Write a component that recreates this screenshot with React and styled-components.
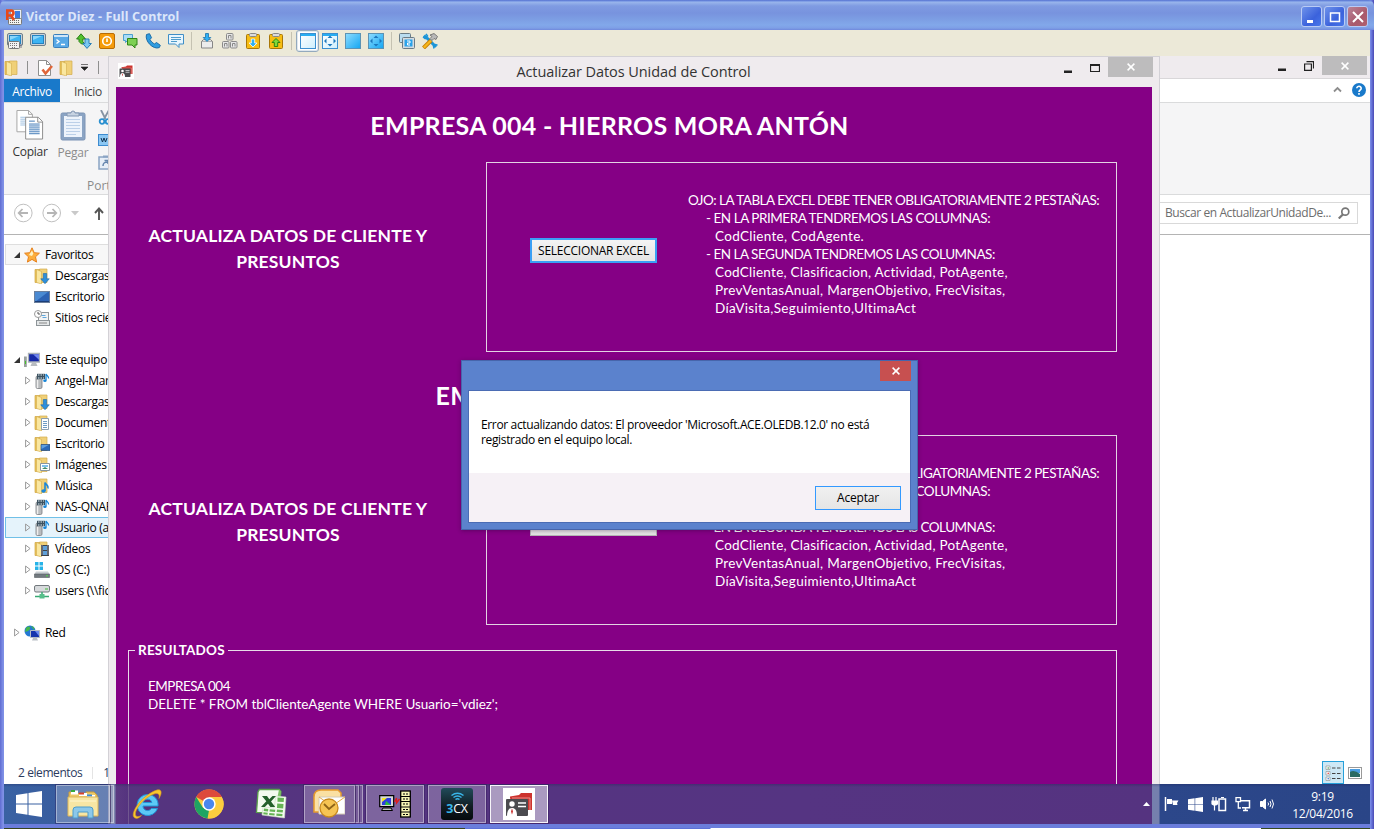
import React from "react";
import styled, { createGlobalStyle, css } from "styled-components";

const ui = '"Open Sans", "Noto Sans", sans-serif';
const form = 'Lato, "Open Sans", sans-serif';

const GlobalStyle = createGlobalStyle`
  *, *::before, *::after { box-sizing: border-box; }
  html, body { margin: 0; overflow: hidden; }
  body { font: 12px/16px ${ui}; color: #1a1a1a; }
  button { font: inherit; padding: 0; border: 0; }
  svg { display: block; flex: none; }
`;

/* ---------- remote session frame ---------- */
const Frame = styled.div`
  width: 1374px;
  height: 829px;
  display: flex;
  flex-direction: column;
  background: linear-gradient(90deg, #5f6cd2 0, #7f90e6 3px, #7f90e6 1370px, #6f80e2 1371px, #4a4ab4 1374px);
  overflow: hidden;
`;
const TitleBar = styled.header`
  height: 30px;
  flex: none;
  display: flex;
  align-items: center;
  padding: 3px 6px 0 6px;
  border-radius: 6px 6px 0 0;
  background: linear-gradient(#5b76cf 0, #6a8ae0 1px, #9ab6ec 2px, #93afe9 3px, #7f9be2 6px, #7893de 13px, #7d9fe4 20px, #82a8ea 25px, #7e9fe6 28px, #7088dc 30px);
`;
const SessionTitle = styled.h1`
  margin: 0 auto 0 4px;
  font: bold 12.5px/16px "Noto Sans", sans-serif;
  letter-spacing: 0.16px;
  color: #dce6fa;
`;
const XpButton = styled.button`
  width: 21px;
  height: 21px;
  margin-left: 2px;
  display: grid;
  place-items: center;
  border: 1px solid #b9cbf5;
  border-radius: 3px;
  background: ${(p) => (p.$close ? "linear-gradient(135deg,#b98397,#a9596c 60%,#b0606e)" : "linear-gradient(135deg,#6f93ea,#3b62dc 60%,#4877ea)")};
`;
const FrameBody = styled.div`
  flex: 1;
  min-height: 0;
  display: flex;
  flex-direction: column;
  margin: 0 4px;
`;
const SessionToolbar = styled.nav`
  height: 26px;
  flex: none;
  display: flex;
  align-items: center;
  padding-bottom: 4px;
  background: #ece9d8;
`;
const Tool = styled.button`
  width: 23px;
  height: 22px;
  display: grid;
  place-items: center;
  padding-right: 1px;
  background: none;
  ${(p) => p.$active && css`
    padding: 0;
    border: 1px solid #93a9bd;
    border-radius: 3px;
    background: #fff;
    box-shadow: inset 0 0 0 1px #dfe7ee;
  `}
`;
const ToolDivider = styled.span`
  width: 1px;
  height: 18px;
  margin: 0 4px 0 3px;
  background: #c5c2b2;
`;
const Desktop = styled.main`
  position: relative;
  height: 768px;
  flex: none;
  overflow: hidden;
  background: #fff;
`;
const FrameBottom = styled.div`
  height: 5px;
  flex: none;
  border-top: 4px solid #6b7ddb;
  background: linear-gradient(90deg, #36421c 461px, #5c70d6 461px, #5c70d6 706px, #fff 707px, #fff 1257px, #34471c 1257px);
`;

/* ---------- file explorer ---------- */
const Explorer = styled.section`
  height: 728px;
  display: flex;
  flex-direction: column;
  background: #fff;
`;
const ExplorerTop = styled.div`
  height: 23px;
  flex: none;
  display: flex;
  align-items: flex-start;
  justify-content: space-between;
  background: #efebee;
  border-bottom: 1px solid #d9d7d9;
`;
const QuickAccess = styled.div`
  display: flex;
  align-items: center;
  height: 23px;
  gap: ${(p) => p.$gap || 0}px;
`;
const QuickDivider = styled.i`
  width: 1px;
  height: 13px;
  margin: 0 9px 0 ${(p) => p.$before || 7}px;
  background: #8f8f8f;
`;
const Controls = styled.div`
  display: flex;
  align-items: flex-start;
  justify-content: flex-end;
  margin-right: ${(p) => p.$right}px;
`;
const ControlGlyph = styled.span`
  width: 27px;
  height: ${(p) => p.$h || 21}px;
  display: grid;
  place-items: center;
`;
const GreyClose = styled.button`
  width: 45px;
  height: ${(p) => p.$h}px;
  display: grid;
  place-items: center;
  background: #bdbcbd;
`;
const Tabs = styled.div`
  height: 24px;
  flex: none;
  display: flex;
  align-items: center;
  background: #fff;
  border-bottom: 1px solid #dadbdc;
`;
const Tab = styled.div`
  height: 23px;
  width: 56px;
  line-height: 25px;
  text-align: center;
  letter-spacing: -0.3px;
  color: ${(p) => (p.$file ? "#fff" : "#444")};
  background: ${(p) => (p.$file ? "#1979ca" : "#f5f6f7")};
`;
const Help = styled.div`
  margin-left: auto;
  display: flex;
  align-items: center;
  gap: 10px;
  padding: 0 4px 2px 0;
`;
const Ribbon = styled.div`
  height: 92px;
  flex: none;
  display: flex;
  padding-top: 7px;
  background: #f5f5f6;
  border-bottom: 1px solid #dadbdc;
`;
const RibbonItem = styled.div`
  width: ${(p) => p.$w}px;
  display: flex;
  flex-direction: column;
  align-items: center;
  gap: 4px;
  letter-spacing: -0.25px;
  white-space: nowrap;
  color: ${(p) => (p.$dim ? "#8c8c8c" : "#333")};
`;
const RibbonStack = styled.div`
  width: 60px;
  margin-left: 8px;
  display: flex;
  flex-direction: column;
  gap: 9px;
`;
const GroupLabel = styled.span`
  margin: -1px 0 0 -11px;
  color: #8a8a8a;
`;
const AddressBar = styled.div`
  height: 40px;
  flex: none;
  display: flex;
  align-items: center;
  padding: 0 12px 3px 9px;
  gap: 9px;
  border-bottom: 1px solid #b4b4b4;
  > svg:nth-child(4) { margin-left: 6px; }
`;
const SearchBox = styled.div`
  margin-left: auto;
  width: 206px;
  height: 22px;
  display: flex;
  align-items: center;
  justify-content: space-between;
  padding: 0 7px 0 12px;
  border: 1px solid #d9d9d9;
  color: #6d6d6d;
  letter-spacing: -0.41px;
  white-space: nowrap;
`;
const Tree = styled.ul`
  flex: 1;
  margin: 0;
  padding: 9px 0 0 1px;
  list-style: none;
`;
const TreeRow = styled.li`
  height: 21px;
  width: 140px;
  display: flex;
  align-items: center;
  padding-left: ${(p) => (p.$level ? 19 : 8)}px;
  white-space: nowrap;
  letter-spacing: -0.32px;
  color: #000;
  border: 1px solid ${(p) => (p.$state === "selected" ? "#70c0e7" : p.$state === "focus" ? "#dedede" : "transparent")};
  background: ${(p) => (p.$state === "selected" ? "#e5f3fb" : p.$state === "focus" ? "#f7f7f7" : "none")};
`;
const Expander = styled.span`
  width: ${(p) => (p.$level ? 9 : 10)}px;
  display: grid;
  place-items: center start;
`;
const TreeIcon = styled.span`
  width: 21px;
`;
const StatusBar = styled.footer`
  height: 23px;
  flex: none;
  display: flex;
  align-items: center;
  padding: 0 8px 0 14px;
  color: #2b3a5e;
  letter-spacing: -0.42px;
`;
const StatusDivider = styled.i`
  width: 1px;
  height: 12px;
  margin: 0 10px 0 10px;
  background: #e4e4e4;
`;
const ViewButtons = styled.div`
  margin-left: auto;
  display: flex;
  align-items: center;
  gap: 4px;
`;
const ViewActive = styled.span`
  width: 22px;
  height: 23px;
  display: grid;
  place-items: center;
  border: 1px solid #26a0da;
  background: #cde8f5;
`;

/* ---------- update tool window ---------- */
const AppWindow = styled.section`
  position: absolute;
  left: 104px;
  top: 0;
  width: 1052px;
  height: 768px;
  display: flex;
  flex-direction: column;
  padding: 0 7px;
  background: #efebee;
  border: 1px solid #d3d1d6;
  border-bottom: 0;
`;
const AppTitle = styled.header`
  height: 30px;
  flex: none;
  display: grid;
  grid-template-columns: 1fr auto 1fr;
  align-items: start;
  > svg { margin: 6px 0 0 2px; }
`;
const AppName = styled.h2`
  margin: 0 1px 0 0;
  font: 14.5px/29px ${ui};
  letter-spacing: -0.08px;
  color: #333;
`;
const AppBody = styled.div`
  flex: 1;
  padding: 0 35px 0 12px;
  background: #850085;
  color: #fff;
  font-family: ${form};
`;
const Company = styled.h3`
  height: ${(p) => p.$h}px;
  margin: 0;
  padding: 0 26px 0 0;
  text-align: center;
  font: bold 25px/${(p) => p.$line}px ${form};
  letter-spacing: 0.26px;
  white-space: nowrap;
`;
const UpdateRow = styled.div`
  height: 190px;
  display: grid;
  grid-template-columns: 320px 631px;
  justify-content: space-between;
`;
const UpdateLabel = styled.p`
  margin: 61px 0 0;
  text-align: center;
  font: bold 17.5px/26px ${form};
  letter-spacing: 0.18px;
`;
const GroupBox = styled.div`
  display: flex;
  align-items: flex-start;
  border: 1px solid #e3d3e3;
  padding-left: 43px;
`;
const ExcelButton = styled.button`
  width: 127px;
  height: 25px;
  flex: none;
  margin: 75px 31px 0 0;
  font: 12px/20px ${ui};
  letter-spacing: -0.26px;
  color: #000;
  white-space: nowrap;
  background: linear-gradient(#f4f4f4, #e4e4e4);
  border: ${(p) => (p.$focus ? "2px solid #3aa0f5" : "1px solid #b4b4b4")};
`;
const Notes = styled.div`
  margin-top: 28px;
  font: 13.5px/18px ${form};
  white-space: nowrap;
`;
const NoteLine = styled.div`
  padding-left: ${(p) => p.$indent}px;
  letter-spacing: ${(p) => p.$spacing}px;
`;
const Results = styled.fieldset`
  height: 200px;
  margin: 16px 0 0;
  padding: 18px 19px;
  border: 1px solid #e8dce8;
  font: 13.5px/18px ${form};
  legend {
    margin-left: -13px;
    padding: 0 3px;
    font-weight: bold;
    letter-spacing: 0.2px;
  }
`;
const ResultLine = styled.div`
  letter-spacing: ${(p) => (p.$caps ? -0.5 : -0.04)}px;
`;

/* ---------- error dialog ---------- */
const Dialog = styled.section`
  position: absolute;
  left: 457px;
  top: 304px;
  width: 457px;
  height: 170px;
  display: flex;
  flex-direction: column;
  padding: 0 6px 6px;
  background: #5b82cd;
  border: 1px solid #4765ab;
  box-shadow: 0 1px 4px rgba(30, 0, 40, 0.35);
`;
const DialogTop = styled.div`
  height: 29px;
  flex: none;
  display: flex;
  justify-content: flex-end;
`;
const RedClose = styled.button`
  width: 31px;
  height: 20px;
  display: grid;
  place-items: center;
  background: #c75050;
`;
const DialogBody = styled.div`
  flex: 1;
  display: flex;
  flex-direction: column;
  border: 1px solid #4b6cb4;
  background: #fff;
`;
const Message = styled.p`
  flex: 1;
  margin: 0;
  padding: 26px 12px 0;
  font-size: 12px;
  line-height: 15px;
  letter-spacing: -0.35px;
  color: #000;
  white-space: nowrap;
`;
const DialogFooter = styled.div`
  height: 49px;
  display: flex;
  justify-content: flex-end;
  padding: 13px 9px 0 0;
  background: #f6f1f6;
`;
const AcceptButton = styled.button`
  width: 86px;
  height: 24px;
  color: #000;
  letter-spacing: -0.2px;
  border: 1px solid #3399ff;
  background: linear-gradient(#f0f0f0, #e5e5e5);
`;

/* ---------- taskbar ---------- */
const Taskbar = styled.footer`
  position: absolute;
  left: 0;
  bottom: 0;
  width: 1366px;
  height: 40px;
  display: flex;
  align-items: center;
  color: #fff;
  background:
    linear-gradient(rgba(20, 20, 70, 0.25), transparent 3px),
    linear-gradient(90deg, #3a62a3 0, #37599b 104px, #7e87ae 104px, #7e87ae 111px, #5b3a82 112px, #55347f 124px, #8d7aa0 124px, #55347f 125px, #553482 800px, #553380 1148px, #7580ad 1148px, #7580ad 1155px, #2c478a 1156px, #2a4587 1366px);
`;
const StartSlot = styled.div`
  width: 52px;
  height: 40px;
  display: grid;
  place-items: center;
  padding-right: 3px;
`;
const TaskSlot = styled.div`
  width: 62px;
  height: 40px;
  display: flex;
  align-items: center;
  justify-content: center;
`;
const TaskButton = styled.div`
  width: ${(p) => p.$w || 58}px;
  height: 38px;
  display: grid;
  place-items: center;
  border: 1px solid rgba(255, 255, 255, ${(p) => (p.$active ? 0.9 : 0.4)});
  outline: 1px solid rgba(40, 20, 80, 0.35);
  background: rgba(255, 255, 255, ${(p) => (p.$active ? 0.5 : 0.24)});
`;
const StackEdge = styled.i`
  width: 4px;
  height: 38px;
  margin-right: ${(p) => p.$after || 0}px;
  border: 1px solid rgba(255, 255, 255, 0.4);
  border-left: 1px solid rgba(40, 20, 80, 0.5);
  background: rgba(255, 255, 255, 0.2);
`;
const Tray = styled.div`
  margin-left: auto;
  display: flex;
  align-items: center;
  gap: 8px;
`;
const TrayArrow = styled.span`
  margin-right: 6px;
`;
const Clock = styled.time`
  width: 95px;
  margin-left: -8px;
  text-align: center;
  line-height: 17px;
  letter-spacing: -0.3px;
  padding-top: 2px;
`;

/* ---------- drawings ---------- */
const Svg = ({ w = 16, h = w, box, children }) => (
  <svg width={w} height={h} viewBox={box || `0 0 ${w} ${h}`} fill="none">{children}</svg>
);
const Monitor = ({ keys }) => (
  <Svg>
    <rect x=".5" y=".5" width="15" height="12" rx="1.5" fill="#c9d2d8" stroke="#6f7f8a" />
    <rect x="2.5" y="2.5" width="11" height="8" fill="#3db4f2" stroke="#2383c2" />
    <path d="M3 7V3h9z" fill="#8ad6fb" />
    {keys && <><rect x="1.5" y="8.5" width="11" height="7" rx="1" fill="#f2f2f2" stroke="#777" /><path d="M3 10.5h8M3 12.5h8M5 14.5h4" stroke="#777" strokeDasharray="1 1" /><path d="M14 11v4" stroke="#778" /></>}
  </Svg>
);
const SessionLogo = () => (
  <Svg>
    <rect x="4.5" y=".5" width="11" height="11" fill="#e9eef5" stroke="#8d98a8" />
    <rect x="9" y="2" width="5" height="7" fill="#3c7be0" />
    <rect x="2.5" y="9.5" width="13" height="6" rx="1" fill="#f2f2ee" stroke="#777" />
    <path d="M4 11.5h9M4 13.5h9" stroke="#666" strokeDasharray="1 1" />
    <path d="M1.300 11V1.500H5a2.400 2.400 0 0 1 0 5H2M5 6.500l3 4.500" stroke="#e8481c" strokeWidth="2.600" />
  </Svg>
);
const Terminal = () => (
  <Svg><rect x=".5" y="1.5" width="15" height="13" rx="1" fill="#58a9e6" stroke="#3a80bd" /><path d="M1 2h14v2H1z" fill="#cfe6f7" /><path d="M3.500 6.500L6 8.500 3.500 10.500M8 11.500h4" stroke="#fff" strokeWidth="1.300" /></Svg>
);
const Transfer = () => (
  <Svg><path d="M5 .8L9.500 6H6.800v2.500l2 2.500H5.500L3 8.500V6H.6z" fill="#54c22e" stroke="#2b7f17" /><path d="M11 15.400L6.800 10.500H9V6h4v4.500h2.400z" fill="#7cc8f0" stroke="#2a7fb8" /></Svg>
);
const Power = () => (
  <Svg><rect x=".5" y=".5" width="15" height="15" rx="1.5" fill="#f59b0a" stroke="#b86c05" /><circle cx="8" cy="8" r="4.300" stroke="#fff" strokeWidth="1.600" /><path d="M8 5.500V9" stroke="#fff" strokeWidth="1.600" /></Svg>
);
const Chat = () => (
  <Svg><path d="M1.500 1.500h9v6h-5l-2 2v-2h-2z" fill="#a9dcf6" stroke="#4a9fd0" /><path d="M5.500 5.500h9.500v6.500h-2v3l-3-3H5.500z" fill="#7ed053" stroke="#2f8516" /></Svg>
);
const Phone = () => (
  <Svg><path d="M1.500 1.500l3-.8 2 4L5 6.500c1 2 2.500 3.600 4.600 4.400L11.500 9.500l3.800 2.800-1 2.300C8 17 -.5 8 1.500 1.500z" fill="#2f9de0" stroke="#1c6ca8" /></Svg>
);
const Speech = () => (
  <Svg><path d="M.5 1.500h15v9.500H11V14.500L7.500 11h-7z" fill="#e7f5fd" stroke="#3f8ec6" /><path d="M3 4.500h10M3 6.500h10M3 8.500h6" stroke="#4e9ccc" /></Svg>
);
const Install = () => (
  <Svg><path d="M2.500 8.500h11v6.500h-11z" fill="#ececec" stroke="#868686" /><path d="M2.500 8.500l2-2h7l2 2" fill="#ddd" stroke="#868686" /><path d="M6.500.5h3v4h2.300L8 8.500 4.200 4.500h2.300z" fill="#2fb0f4" stroke="#1973ad" strokeWidth=".8" /></Svg>
);
const Cube = ({ x, y }) => <><rect x={x + 0.5} y={y + 0.5} width="6.5" height="6.5" rx="1" fill="#e6e6e6" stroke="#8b8b8b" /><path d={`M${x + 2.5} ${y + 5.5}v-3h2.500v3`} stroke="#888" /></>;
const Cubes = () => <Svg><Cube x={4} y={0} /><Cube x={0} y={8} /><Cube x={8} y={8} /></Svg>;
const Clip = ({ up }) => (
  <Svg>
    <rect x="1.5" y="1.5" width="13" height="14" rx="1" fill="#f7bd12" stroke="#a97708" />
    <rect x="4.5" y=".5" width="7" height="3" rx="1" fill="#dcdcdc" stroke="#888" />
    {up ? <path d="M8 5.500l4 4h-2.300v4H6.300v-4H4z" fill="#7fd83a" stroke="#2f8410" /> : <path d="M8 14l4-4H9.700V6H6.300v4H4z" fill="#2fb0f0" stroke="#fff" strokeWidth=".8" />}
  </Svg>
);
const Arrows4 = () => <path d="M8 2.500l2.500 2.500h-5zM8 13.500l2.500-2.500h-5zM2 8l2.500-2.500v5zM14 8l-2.500-2.500v5z" fill="#1d78bd" />;
const Screen = ({ kind }) => (
  <Svg>
    <defs><linearGradient id={`scr-${kind}`} x1="0" y1="0" x2="1" y2="1"><stop stopColor={kind < 2 ? "#fff" : "#8fdcff"} /><stop offset="1" stopColor={kind < 2 ? "#cdeefd" : "#12a6f2"} /></linearGradient></defs>
    <rect x=".5" y=".5" width="15" height="15" fill={`url(#scr-${kind})`} stroke={kind < 2 ? "#3b8fd0" : "#5c93b4"} />
    {kind < 2 && <path d="M1 1h14v2H1z" fill="#28aef2" />}
    {kind === 1 && <rect x="5.5" y="5.5" width="5" height="5" fill="#eaf8ff" />}
    {kind % 2 === 1 && <Arrows4 />}
  </Svg>
);
const Screens = () => (
  <Svg><rect x=".5" y=".5" width="11" height="9" rx="1" fill="#b9dcef" stroke="#697b86" /><rect x="3.5" y="4.5" width="12" height="11" rx="1" fill="#d5dbe0" stroke="#697b86" /><rect x="5.5" y="6.5" width="8" height="7" fill="#2ba3ea" /><path d="M8 8h3v2H8.500v2H11" stroke="#fff" /></Svg>
);
const Tools = () => (
  <Svg><path d="M2 2.500l3 3M5 5l7 7 2 2" stroke="#1b95d8" strokeWidth="3" /><path d="M1 4l2 1.500L5.500 3 4 .8M12 15.500l-.5-2.500 2-1.500 2 .8" stroke="#1b95d8" strokeWidth="1.500" /><path d="M1.500 15L9 7.500" stroke="#c47d06" strokeWidth="4" /><path d="M1.800 14.600L9 7.500" stroke="#f7b71b" strokeWidth="2.300" /><path d="M8 2l4-1.500 3.500 3-1.500 3-2-1-2 2-2-2 2-2z" fill="#b9b9b9" stroke="#666" strokeWidth=".8" /></Svg>
);
const Folder = ({ children }) => (
  <Svg>
    <path d="M1 1.500h5v13H1z" fill="#ecc55a" stroke="#cfa544" strokeWidth=".7" />
    <path d="M5.500 1h7.500v13.500H5.500z" fill="#f0d078" stroke="#d3ac4d" strokeWidth=".7" />
    <path d="M2.500 1.500l5 2V16l-5-1.500z" fill="#fae7a0" stroke="#d3ac4d" strokeWidth=".6" />
    {children}
  </Svg>
);
const DocCheck = () => (
  <Svg><path d="M1.500.5h8l4 4v11h-12z" fill="#fff" stroke="#8f8f8f" /><path d="M9.500.5v4h4" stroke="#8f8f8f" /><path d="M5.500 9.500l3 4L15 6" stroke="#e0663a" strokeWidth="2.600" /></Svg>
);
const Caret = () => <Svg w={7} h={7}><path d="M0 .5h7M0 3h7L3.500 6.500z" stroke="#222" strokeWidth=".6" fill="#222" /></Svg>;
const CardIcon = ({ w = 16 }) => (
  <Svg w={w} box="0 0 32 32">
    <rect width="32" height="32" fill="#fff" />
    <path d="M7 10.500V8.500L16 7l2-2h11v17h-4" fill="#cd332e" />
    <path d="M9 10h18v12" stroke="#f0a8a3" strokeWidth=".8" />
    <rect x="3" y="11" width="22" height="17" rx="1" fill="#4b4b4f" />
    <circle cx="9" cy="16" r="2.700" fill="#fff" /><path d="M4 28c0-6 2-8 5-8s5 2 5 8z" fill="#fff" />
    <path d="M9 20.500l1 3-1 3-1-3z" fill="#c8302c" /><path d="M15 15h8M15 18.500h8" stroke="#fff" strokeWidth="1.300" />
  </Svg>
);
const MinGlyph = () => <Svg w={8} h={10}><path d="M0 7.500h8v2.500H0z" fill="#222" /></Svg>;
const MaxGlyph = () => <Svg w={10} h={8}><path d="M.5 1.500h9v6h-9zM0 .7h10" stroke="#222" strokeWidth="1.200" /></Svg>;
const RestoreGlyph = () => <Svg w={10} h={10}><path d="M.6 3h6.800v6.400H.6zM0 3h8M2.500.6h7v7" stroke="#222" strokeWidth="1.200" /></Svg>;
const Cross = () => <Svg w={8}><path d="M.6.6l6.800 6.800M7.400.6L.6 7.400" stroke="#fff" strokeWidth="1.500" /></Svg>;

const CopyPages = () => (
  <Svg w={28} h={30} box="0 0 28 31">
    <path d="M.5.5h12l4 4v18H.5z" fill="#fff" stroke="#a5a5a5" /><path d="M12.500.5v4h4" stroke="#a5a5a5" /><path d="M4 7.500h6M4 9.500h6M4 11.500h6M4 13.500h6M4 15.500h6" stroke="#9fc0e0" />
    <path d="M9.500 7.500h13l4.500 4.500v18H9.500z" fill="#fff" stroke="#8c8c8c" /><path d="M22 7.500v5h5" stroke="#8c8c8c" /><path d="M13 14.500h11M13 16.500h11M13 18.500h11M13 20.500h11M13 22.500h11M13 24.500h11" stroke="#3f79b6" /><path d="M13 11.500h6" stroke="#3f79b6" />
  </Svg>
);
const PasteBoard = () => (
  <Svg w={26} h={31}>
    <rect x="1" y="3" width="24" height="27" rx="1.5" fill="#8ba4c4" stroke="#7d94b5" /><rect x="4" y="6" width="18" height="21" fill="#edf3fb" />
    <path d="M6 9.500h14M6 12.500h14M6 15.500h14M6 18.500h14M6 21.500h14M6 24.500h10" stroke="#bcd0e8" /><path d="M7 3h4a2 2 0 0 1 4 0h4v3H7z" fill="#c7d3e2" stroke="#8296b2" />
  </Svg>
);
const Scissors = () => <Svg w={14} h={15}><path d="M3 0l4.500 9M11 0L6 9" stroke="#8593a3" strokeWidth="1.800" /><circle cx="4" cy="11.5" r="2.300" stroke="#2a90d0" strokeWidth="1.800" /><circle cx="10" cy="11.5" r="2.300" stroke="#2a90d0" strokeWidth="1.800" /></Svg>;
const PathBox = () => <Svg w={16} h={12}><rect x=".5" y=".5" width="15" height="11" fill="#8cc7f3" stroke="#3d8bd0" /><path d="M3 4l1.500 4L6 4l1.500 4L9 4M10 8h1M12 8h1" stroke="#12324f" /></Svg>;
const ShortcutBox = () => <Svg w={16} h={15}><rect x="1" y="2" width="14" height="12" fill="#e7eef7" stroke="#8ba4c4" strokeWidth="1.500" /><path d="M5 1.500h6" stroke="#8ba4c4" strokeWidth="2" /><path d="M5 11c0-3 1-4 5-4M6.500 5.500H10V9" stroke="#6585ad" strokeWidth="1.500" /></Svg>;
const NavCircle = ({ flip }) => (
  <Svg w={20}><g transform={flip ? "translate(20 0) scale(-1 1)" : undefined}><circle cx="10.300" cy="10" r="8.800" stroke="#c0c0c0" /><path d="M15 10H6M9.500 6L5.700 10l3.800 4" stroke="#b5b5b5" strokeWidth="1.800" /></g></Svg>
);
const UpArrow = () => <Svg w={10} h={13}><path d="M5 13V2M1 6l4-4.500L9 6" stroke="#555" strokeWidth="1.900" /></Svg>;
const Magnifier = () => <Svg w={12}><circle cx="7.300" cy="4.700" r="3.500" stroke="#777" strokeWidth="1.700" /><path d="M5 7.300L.8 11.500" stroke="#777" strokeWidth="2.200" /></Svg>;
const HelpGlyph = () => <Svg w={14}><circle cx="7" cy="7" r="7" fill="#1979ca" /><path d="M4.800 5.300a2.200 2 0 1 1 3.500 1.600C7.500 7.500 7 7.800 7 9M7 10v1.700" stroke="#fff" strokeWidth="1.600" /></Svg>;

const treeIcons = {
  star: <Svg><path d="M8 .8l2.200 4.900 5.200.5-3.900 3.600 1.100 5.300L8 12.400l-4.600 2.700 1.100-5.300L.6 6.200l5.200-.5z" fill="#fcae3c" stroke="#e6801c" /><path d="M8 3.500l1.300 3.300L8 9 5 8z" fill="#fff2c2" /></Svg>,
  download: <Folder><path d="M9.300 5.500h3.400v5.300h2.600L11 15.700l-4.300-4.900h2.600z" fill="#2d8fdc" stroke="#1b68ac" strokeWidth=".6" /></Folder>,
  desktop: <Svg><rect x=".5" y="2.5" width="15" height="11" fill="#2d63b4" stroke="#6b7f9c" /><path d="M1 13V3h13z" fill="#4a8ad2" /><path d="M1 12.500h14" stroke="#1c3f78" /></Svg>,
  recent: <Svg><rect x="4.5" y="2.5" width="10" height="9" fill="#f3f3f3" stroke="#8e9498" /><path d="M6.500 5.500h5M8.500 7.500h4" stroke="#5fa7dd" /><rect x="2.5" y="10.5" width="13" height="5" fill="#e4e7e8" stroke="#8e9498" /><path d="M5 13h8" stroke="#888" /><circle cx="4" cy="4" r="3.5" fill="#fff" stroke="#9a9a9a" /><path d="M4 2v2h2" stroke="#555" /></Svg>,
  pc: <Svg><path d="M4.500 1.500h11v8.500h-11z" fill="#1629a6" stroke="#a9b0b6" strokeWidth="1.300" /><path d="M9 2.200h6v5.500z" fill="#6f86ee" /><path d="M8 10.500h4l1.500 3.500h-7z" fill="#b8bcc0" /><rect y="4.500" width="2.800" height="10.500" fill="#9ba29f" /><path d="M1.500 9v3" stroke="#45c32b" /></Svg>,
  media: <Svg><rect x="2" y="3" width="6" height="12.500" rx="1.5" fill="#b9bcbe" stroke="#787c80" strokeWidth=".8" /><path d="M3.500 7v8" stroke="#eee" strokeWidth="1.500" /><path d="M3 .8h8v5.400H3z" fill="#3d5260" /><path d="M4 2h6M4 5h6" stroke="#dfe9ee" strokeDasharray="1.500 1" /><path d="M12 7.500V1c1 2 3 2 2.500 4.500" stroke="#1685d8" strokeWidth="1.300" /><ellipse cx="10.900" cy="7.800" rx="1.700" ry="1.200" fill="#1685d8" /></Svg>,
  docs: <Folder><path d="M7.500 3.500h7v11h-7z" fill="#fff" stroke="#8d9fae" /><path d="M9 6.500h4M9 8.500h4M9 10.500h4M9 12.500h4" stroke="#6d9cc4" /></Folder>,
  deskFolder: <Folder><path d="M7 8.500h9v6H7z" fill="#2b69b8" stroke="#274d7d" strokeWidth=".7" /><path d="M7.500 9h7l-7 4z" fill="#5ea0e2" /></Folder>,
  pics: <Folder><path d="M6.500 6.500h9v7h-9z" fill="#fff" stroke="#8895a0" /><path d="M8 8h6v2H8z" fill="#7bc0ef" /><path d="M8 12l3-2 3 2z" fill="#3f8a6a" /></Folder>,
  music: <Folder><path d="M11 13V4.500c.5 2.500 4 2.500 3 6" stroke="#1b86d8" strokeWidth="1.600" /><ellipse cx="9.500" cy="13" rx="2.200" ry="1.700" fill="#1b86d8" /></Folder>,
  video: <Folder><path d="M7 4h8v11H7z" fill="#3c4248" /><path d="M9 5h4v4H9zM9 10h4v4H9z" fill="#5fa0d8" /><path d="M8 4.500v10M14 4.500v10" stroke="#dde" strokeDasharray="1 1" /></Folder>,
  drive: <Svg><path d="M1 0h3.500v3.500H1zM5.500 0H9v3.500H5.500zM1 4.500h3.500V8H1zM5.500 4.500H9V8H5.500z" fill="#27b3e8" /><path d="M2 9.500h12l1.500 2.500H.5z" fill="#c9ced2" /><path d="M.5 12h15v3.500H.5z" fill="#72797f" stroke="#555c62" strokeWidth=".6" /><path d="M12 13.800h2" stroke="#4fdc42" /></Svg>,
  netdrive: <Svg><rect x=".5" y="2.5" width="15" height="6.5" rx="1.5" fill="#d7dadc" stroke="#73797e" /><path d="M11 6h3" stroke="#41bb3a" /><path d="M8 9v3M1 13.500h14" stroke="#38a873" strokeWidth="1.500" /><rect x="5.5" y="11" width="5" height="4.5" fill="#57bf8b" /></Svg>,
  network: <Svg><circle cx="6" cy="6" r="5.5" fill="#2478d4" /><path d="M2 3c3-3 5-1 4 1S3 6 1 7zM7 1c3 0 4 3 3 4z" fill="#46b84b" /><path d="M6.500 5.500h9v7h-9z" fill="#1534ad" stroke="#b4bcc6" /><path d="M11 6h4v5z" fill="#6a8af0" /><path d="M9 13h4l1 2.500H8z" fill="#babfc5" /></Svg>,
};
const tree = [
  { icon: "star", text: "Favoritos", open: true, state: "focus" },
  { icon: "download", text: "Descargas", level: 1, leaf: true },
  { icon: "desktop", text: "Escritorio", level: 1, leaf: true },
  { icon: "recent", text: "Sitios recientes", level: 1, leaf: true },
  null,
  { icon: "pc", text: "Este equipo", open: true },
  { icon: "media", text: "Angel-Maria", level: 1 },
  { icon: "download", text: "Descargas", level: 1 },
  { icon: "docs", text: "Documentos", level: 1 },
  { icon: "deskFolder", text: "Escritorio", level: 1 },
  { icon: "pics", text: "Imágenes", level: 1 },
  { icon: "music", text: "Música", level: 1 },
  { icon: "media", text: "NAS-QNAP", level: 1 },
  { icon: "media", text: "Usuario (a", level: 1, state: "selected" },
  { icon: "video", text: "Vídeos", level: 1 },
  { icon: "drive", text: "OS (C:)", level: 1 },
  { icon: "netdrive", text: "users (\\\\fiche", level: 1 },
  null,
  { icon: "network", text: "Red" },
];

const WinLogo = ({ w }) => <Svg w={w} h={w} box="0 0 26 26"><path d="M0 4l11.500-1.800v10.300H0zM12.500 2L26 0v12.500H12.500zM0 13.500h11.500v10.300L0 22zM12.500 13.500H26V26l-13.500-2z" fill="#fff" /></Svg>;
const ExplorerLogo = () => (
  <Svg w={32} h={30}>
    <path d="M2 3h8l2 2h7V3h8l3 3v20H2z" fill="#edc868" stroke="#c99c3b" /><path d="M4 1.500h7v4H4z" fill="#fff" /><path d="M4 1h4v2H4z" fill="#35a93b" /><path d="M12 4h8v3h-8z" fill="#fff" /><path d="M12 3.500h5v2h-5z" fill="#d8432c" /><path d="M20 6h8v3h-8z" fill="#fff" /><path d="M20 5.500h5v2h-5z" fill="#3b8ddd" />
    <path d="M1 8h30v19H1z" fill="#f8e6a4" stroke="#dcb558" /><path d="M3 12h26" stroke="#fff6cf" /><path d="M6 29v-8q0-3 3-3h14q3 0 3 3v8h-5v-6h-10v6z" fill="#8cc8ea" stroke="#4c9ccb" />
  </Svg>
);
const IeLogo = () => (
  <Svg w={32} h={32}>
    <path d="M16.500 6.500a10.500 10.500 0 1 0 10 14h-6.200c-2 3.500-8.300 2.500-8.300-2.500h15c.7-6.500-4-11.500-10.500-11.500zm-4.300 8c.8-4.500 8-4.500 8.600 0z" fill="#5cc9f6" stroke="#2196d8" />
    <path d="M4 30c-5-2 1-14 10-21S29 0 30 3.500c.5 2-.5 4.500-2 7 1-4-.5-6-5-4.500C13 9.500 3 22 4.500 27c.6 2 3 2 6 .5C8 30 6 31 4 30z" fill="#f7c62e" stroke="#d9981a" strokeWidth=".6" />
  </Svg>
);
const ChromeLogo = () => (
  <Svg w={30}>
    <circle cx="15" cy="15" r="14.5" fill="#fccd3f" /><path d="M15 15L2.200 8A14.500 14.500 0 0 1 27.800 8H15z" fill="#dd4a3c" /><path d="M2.200 8L8.800 18.500 15 21.500 13.500 29.400A14.500 14.500 0 0 1 2.200 8z" fill="#1fa463" /><path d="M27.800 8H15v7l6.200 3.500-7.500 11a14.500 14.500 0 0 0 14.100-21.500z" fill="#fccd3f" /><circle cx="15" cy="15" r="6.700" fill="#fff" /><circle cx="15" cy="15" r="5.200" fill="#4a87ee" />
  </Svg>
);
const ExcelLogo = () => (
  <Svg w={32} h={32}>
    <path d="M4.500 1.500H24l2 2-2.500 22-22-1L3 4z" fill="#f3faef" stroke="#5aa04b" strokeWidth="1.300" />
    <path d="M24 1.500l2 2-1 8h-3z" fill="#7cc065" />
    <path d="M21 8l10 1-1.500 21L7 27l1-8 11 1z" fill="#f4faf0" stroke="#c9dcc2" strokeWidth=".6" />
    <path d="M22.500 9.500l6.500.5-.3 4-6.200-.3zM22.200 15.500l6.300.5-.3 4.500-6.200-.5zM22 21.500l6 .5-.3 2.500-6-.4zM21.500 25.500l6 .6-.2 2.200-6-.6zM14.800 21.300l5.500.4-.3 2.400-5.500-.5zM14.300 25l5.400.4-.2 2.200-5.400-.7zM9 20.600l4.300.4-.3 2.500-4.300-.4zM8.500 24.300l4.300.4-.3 2-4.200-.5z" fill="#66b355" />
    <path d="M7 8h5l2.300 3.300L17.500 8H21l-5 5.500 4.200 5.500h-4.800L13 15.700 9.800 19H6l5.300-5.700z" fill="#245f2b" />
  </Svg>
);
const OutlookLogo = () => (
  <Svg w={32} h={32}>
    <path d="M8 2h17l3 3v19H1V9q0-7 7-7z" fill="#fae0a3" stroke="#e69a2d" strokeWidth="1.500" /><path d="M6 9h26v17H6z" fill="#fff" stroke="#d5cbb4" /><path d="M6 9l13 9L32 9" stroke="#e2a94a" /><circle cx="16" cy="20" r="9" fill="#f6c453" stroke="#c98a1e" strokeWidth="1.300" /><path d="M11 16l5 5 6-5" stroke="#8f6418" strokeWidth="1.800" />
  </Svg>
);
const ServerLogo = () => (
  <Svg w={32} h={28}>
    <path d="M.7 5.700h14v11H.7z" fill="#d8d8d8" stroke="#000" strokeWidth="1.200" /><path d="M3 8h9v7H3z" fill="#2c3de0" /><path d="M3 8h5l-5 4z" fill="#f3ea20" /><path d="M7 11l5 4H6z" fill="#2cbf39" /><path d="M4 18h8l1.500 2.500h-11z" fill="#c0c0c0" stroke="#000" /><path d="M15.500 12l2-4v5l3-4" stroke="#e01b1b" strokeWidth="1.300" />
    <rect x="21.700" y="1" width="9.600" height="26" fill="#f7f5b4" stroke="#000" strokeWidth="1.300" /><path d="M22 6.500h9M22 11.500h9M22 17h9M22 22h9" stroke="#000" /><path d="M24 4h5M24 9h5M24 14h5M24 19.500h5M24 24.500h5" stroke="#000" strokeWidth="1.200" strokeDasharray="2 1" />
  </Svg>
);
const PhoneAppTile = styled.div`
  width: 32px;
  height: 32px;
  display: flex;
  flex-direction: column;
  align-items: center;
  gap: 1px;
  padding-top: 4px;
  border-radius: 3px;
  background: linear-gradient(#214b5a, #101c22 60%, #060a0d);
  font: 12.5px/14px "Open Sans", sans-serif;
  letter-spacing: -0.2px;
  b { color: #39b5e8; }
`;
const Flag = () => <Svg><path d="M1.500 1v14" stroke="#fff" strokeWidth="1.500" /><path d="M3 3h5v5H3z" fill="#fff" /><path d="M8 4.500h6.500L13 7l.5 2H9z" fill="#fff" /></Svg>;
const Battery = () => <Svg><rect x="8" y="3" width="6.5" height="11.5" stroke="#fff" strokeWidth="1.500" /><path d="M10 1.500h3M2 1v4M5 1v4M1 5h5.500v3L5 9H2.500L1 8zM3.500 9v5.500" stroke="#fff" strokeWidth="1.200" fill="#fff" /></Svg>;
const Net = () => <Svg><path d="M6 4.700h8.500v7H7M8 14.500h5M10.500 12v2" stroke="#fff" strokeWidth="1.500" /><path d="M1 1.600h4.500v4H1zM3.300 6v6H6" stroke="#fff" strokeWidth="1.300" /></Svg>;
const Speaker = () => <Svg><path d="M1.500 5.500h2L6.500 3v10l-3-2.500h-2z" stroke="#fff" fill="#fff" /><path d="M9 6.500q1.200 1.500 0 3M11 5q2 3 0 6M13 3.500q3 4.500 0 9" stroke="#fff" /></Svg>;

const notes = [
  { indent: 0, spacing: -0.51, text: "OJO: LA TABLA EXCEL DEBE TENER OBLIGATORIAMENTE 2 PESTAÑAS:" },
  { indent: 18, spacing: -0.47, text: "- EN LA PRIMERA TENDREMOS LAS COLUMNAS:" },
  { indent: 27, spacing: 0.31, text: "CodCliente, CodAgente." },
  { indent: 18, spacing: -0.5, text: "- EN LA SEGUNDA TENDREMOS LAS COLUMNAS:" },
  { indent: 27, spacing: 0.26, text: "CodCliente, Clasificacion, Actividad, PotAgente," },
  { indent: 27, spacing: 0.32, text: "PrevVentasAnual, MargenObjetivo, FrecVisitas," },
  { indent: 27, spacing: 0.34, text: "DíaVisita,Seguimiento,UltimaAct" },
];

function UpdateSection({ company, height, line, focus }) {
  return (
    <>
      <Company $h={height} $line={line}>{company}</Company>
      <UpdateRow>
        <UpdateLabel>ACTUALIZA DATOS DE CLIENTE Y<br />PRESUNTOS</UpdateLabel>
        <GroupBox>
          <ExcelButton $focus={focus}>SELECCIONAR EXCEL</ExcelButton>
          <Notes>{notes.map((n) => <NoteLine key={n.text} $indent={n.indent} $spacing={n.spacing}>{n.text}</NoteLine>)}</Notes>
        </GroupBox>
      </UpdateRow>
    </>
  );
}

function ExplorerWindow() {
  return (
    <Explorer>
      <ExplorerTop>
        <QuickAccess>
          <Folder /><QuickDivider /><DocCheck /><QuickAccess $gap={6}><span /><Folder /><Caret /></QuickAccess><QuickDivider $before={10} />
        </QuickAccess>
        <Controls $right={3}>
          <ControlGlyph $h={19}><MinGlyph /></ControlGlyph>
          <ControlGlyph $h={19}><RestoreGlyph /></ControlGlyph>
          <GreyClose $h={19}><Cross /></GreyClose>
        </Controls>
      </ExplorerTop>
      <Tabs>
        <Tab $file>Archivo</Tab><Tab>Inicio</Tab>
        <Help><Svg w={9} h={7}><path d="M1 5.500L4.500 2 8 5.500" stroke="#8d8d8d" strokeWidth="1.800" /></Svg><HelpGlyph /></Help>
      </Tabs>
      <Ribbon>
        <RibbonItem $w={52}><CopyPages />Copiar</RibbonItem>
        <RibbonItem $w={34} $dim><PasteBoard />Pegar</RibbonItem>
        <RibbonStack>
          <Scissors /><PathBox /><ShortcutBox />
          <GroupLabel>Portapapeles</GroupLabel>
        </RibbonStack>
      </Ribbon>
      <AddressBar>
        <NavCircle /><NavCircle flip />
        <Svg w={8} h={5}><path d="M0 0h8L4 4.500z" fill="#c9c9c9" /></Svg>
        <UpArrow />
        <SearchBox>Buscar en ActualizarUnidadDe...<Magnifier /></SearchBox>
      </AddressBar>
      <Tree>
        {tree.map((row, i) => row ? (
          <TreeRow key={i} $level={row.level} $state={row.state}>
            <Expander $level={row.level}>
              {row.open ? <Svg w={6}><path d="M6 0v6H0z" fill="#333" /></Svg>
                : !row.leaf && <Svg w={6} h={9}><path d="M.6 1l4.500 3.500L.6 8z" stroke="#9a9a9a" /></Svg>}
            </Expander>
            <TreeIcon>{treeIcons[row.icon]}</TreeIcon>
            {row.text}
          </TreeRow>
        ) : <TreeRow key={i} />)}
      </Tree>
      <StatusBar>
        2 elementos<StatusDivider />1 elemento
        <ViewButtons>
          <ViewActive><Svg><path d="M1 1h4v3.500H1zM1 6.500h4V10H1zM1 12h4v3.500H1z" fill="#fff" stroke="#888" strokeWidth=".6" /><path d="M7 3h3.500M12 3h3.500M7 8.500h3.500M12 8.500h3.500M7 13.500h3.500M12 13.500h3.500" stroke="#444" /><path d="M2.500 2.500h1.500v1H2.500z" fill="#2c8f3c" /><path d="M2.500 7.800h1.500v1H2.500z" fill="#d22" /><path d="M2.500 13.300h1.500v1H2.500z" fill="#26c" /></Svg></ViewActive>
          <Svg w={14} h={12}><rect x=".5" y=".5" width="13" height="11" fill="#fff" stroke="#999" /><path d="M2 2h10v4H2z" fill="#4b9de0" /><path d="M2 5q4-3 10 2v3H2z" fill="#2b6b62" /></Svg>
        </ViewButtons>
      </StatusBar>
    </Explorer>
  );
}

export default function App() {
  return (
    <Frame>
      <GlobalStyle />
      <TitleBar>
        <SessionLogo />
        <SessionTitle>Victor Diez - Full Control</SessionTitle>
        <XpButton><Svg w={12}><path d="M1 9h6v3H1z" fill="#fff" /></Svg></XpButton>
        <XpButton><Svg w={12}><path d="M1.500 2h9v8.500h-9zM1 2h10" stroke="#fff" strokeWidth="1.500" /></Svg></XpButton>
        <XpButton $close><Svg w={12}><path d="M1 1l10 10M11 1L1 11" stroke="#fff" strokeWidth="2" /></Svg></XpButton>
      </TitleBar>
      <FrameBody>
        <SessionToolbar>
          <Tool><Monitor keys /></Tool><Tool><Monitor /></Tool><Tool><Terminal /></Tool><Tool><Transfer /></Tool>
          <Tool><Power /></Tool><Tool><Chat /></Tool><Tool><Phone /></Tool><Tool><Speech /></Tool>
          <ToolDivider />
          <Tool><Install /></Tool><Tool><Cubes /></Tool><Tool><Clip /></Tool><Tool><Clip up /></Tool>
          <ToolDivider />
          <Tool $active><Screen kind={0} /></Tool><Tool><Screen kind={1} /></Tool><Tool><Screen kind={2} /></Tool><Tool><Screen kind={3} /></Tool>
          <ToolDivider />
          <Tool><Screens /></Tool><Tool><Tools /></Tool>
        </SessionToolbar>
        <Desktop>
          <ExplorerWindow />
          <AppWindow>
            <AppTitle>
              <CardIcon />
              <AppName>Actualizar Datos Unidad de Control</AppName>
              <Controls $right={-1}>
                <ControlGlyph><MinGlyph /></ControlGlyph>
                <ControlGlyph><MaxGlyph /></ControlGlyph>
                <GreyClose $h={20}><Cross /></GreyClose>
              </Controls>
            </AppTitle>
            <AppBody>
              <UpdateSection company="EMPRESA 004 - HIERROS MORA ANTÓN" height={75} line={77} focus />
              <UpdateSection company="EMPRESA 005 - HIERROS MO" height={83} line={87} />
              <Results>
                <legend>RESULTADOS</legend>
                <ResultLine $caps>EMPRESA 004</ResultLine>
                <ResultLine>DELETE * FROM tblClienteAgente WHERE Usuario='vdiez';</ResultLine>
              </Results>
            </AppBody>
          </AppWindow>
          <Dialog>
            <DialogTop><RedClose><Cross /></RedClose></DialogTop>
            <DialogBody>
              <Message>Error actualizando datos: El proveedor 'Microsoft.ACE.OLEDB.12.0' no está<br />registrado en el equipo local.</Message>
              <DialogFooter><AcceptButton>Aceptar</AcceptButton></DialogFooter>
            </DialogBody>
          </Dialog>
          <Taskbar>
            <StartSlot><WinLogo w={26} /></StartSlot>
            <TaskButton $w={54}><ExplorerLogo /></TaskButton>
            <StackEdge $after={2} />
            <TaskSlot><IeLogo /></TaskSlot>
            <TaskSlot><ChromeLogo /></TaskSlot>
            <TaskSlot><ExcelLogo /></TaskSlot>
            <TaskSlot><TaskButton $w={51}><OutlookLogo /></TaskButton><StackEdge /><StackEdge /></TaskSlot>
            <TaskSlot><TaskButton><ServerLogo /></TaskButton></TaskSlot>
            <TaskSlot><TaskButton><PhoneAppTile><Svg w={13} h={9}><path d="M.5 3.500q6-4.500 12 0M2.500 5.500q4-3 8 0M4.500 7.500q2-1.500 4 0" stroke="#39b5e8" strokeWidth="1.500" /></Svg><span><b>3</b>CX</span></PhoneAppTile></TaskButton></TaskSlot>
            <TaskSlot><TaskButton $active><CardIcon w={32} /></TaskButton></TaskSlot>
            <Tray>
              <TrayArrow><Svg w={7} h={4}><path d="M0 4h7L3.500 0z" fill="#fff" /></Svg></TrayArrow>
              <Flag /><WinLogo w={15} /><Battery /><Net /><Speaker />
              <Clock>9:19<br />12/04/2016</Clock>
            </Tray>
          </Taskbar>
        </Desktop>
        <FrameBottom />
      </FrameBody>
    </Frame>
  );
}
